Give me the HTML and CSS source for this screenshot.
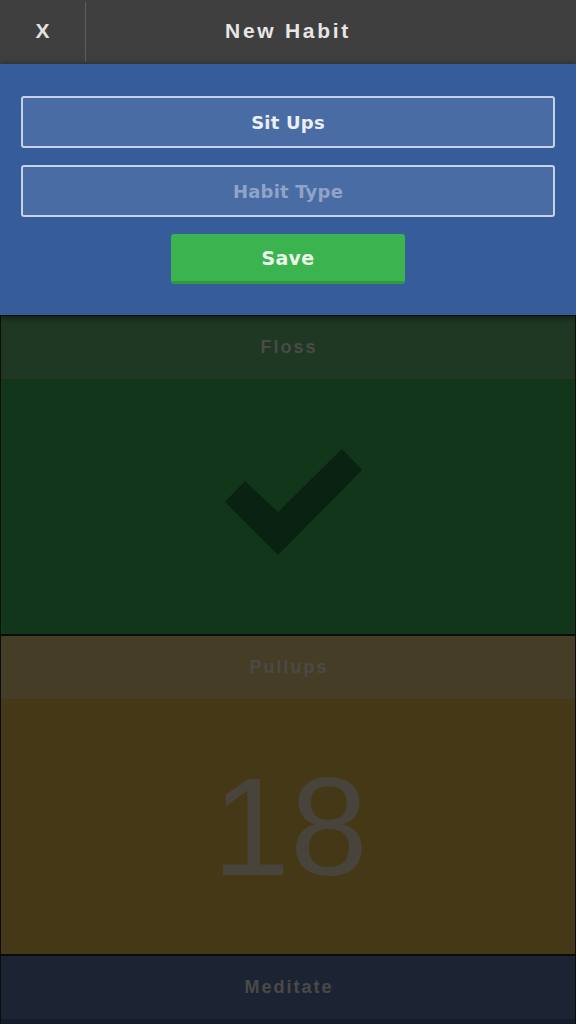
FILE: index.html
```html
<!DOCTYPE html>
<html lang="en">
<head>
<meta charset="utf-8">
<title>New Habit</title>
<link rel="stylesheet" href="styles.css">
</head>
<body>
<div class="app">
  <header class="topbar">
    <div class="close">X</div>
    <div class="divider"></div>
    <div class="title">New Habit</div>
  </header>

  <section class="form-panel">
    <div class="field"><span class="field-value">Sit Ups</span></div>
    <div class="field"><span class="field-placeholder">Habit Type</span></div>
    <div class="save-row"><div class="save-btn">Save</div></div>
  </section>

  <div class="cards">
    <div class="card card-green">
      <div class="card-head">Floss</div>
      <div class="card-body">
        <svg class="check" width="137" height="106" viewBox="0 0 137 106">
          <polygon points="0,53 20,32 53,63 117,0 137,21 53,106" fill="#0a2211"/>
        </svg>
      </div>
    </div>
    <div class="card card-yellow">
      <div class="card-head">Pullups</div>
      <div class="card-body"><span class="count">18</span></div>
    </div>
    <div class="card card-blue">
      <div class="card-head">Meditate</div>
      <div class="card-body"></div>
    </div>
  </div>
</div>
</body>
</html>
```

FILE: styles.css
```css
* { box-sizing: border-box; }

html, body {
  margin: 0;
  padding: 0;
  background: #141b2a;
  overflow: hidden;
}

.app {
  width: 576px;
  font-family: "Liberation Sans", Arial, sans-serif;
}

/* Top bar */
.topbar {
  height: 64px;
  background: #3f3f3f;
  display: flex;
  align-items: stretch;
}

.close {
  width: 85px;
  display: flex;
  align-items: center;
  justify-content: center;
  color: #e2e2e2;
  font-weight: bold;
  font-size: 21px;
  padding-bottom: 2px;
}

.divider {
  width: 1px;
  margin: 2px 0;
  background: #5e5e5e;
}

.title {
  flex: 1;
  display: flex;
  align-items: center;
  justify-content: center;
  padding-right: 86px;
  padding-bottom: 2px;
  color: #e6e6e6;
  font-weight: bold;
  font-size: 21px;
  letter-spacing: 2.7px;
}

/* Form panel */
.form-panel {
  position: relative;
  z-index: 1;
  background: #365c9a;
  padding: 32px 21px 31px;
  display: flex;
  flex-direction: column;
  gap: 17px;
  box-shadow: 0 2px 8px rgba(0, 0, 0, 0.55);
}

.field {
  height: 52px;
  border: 2px solid #c6d2e6;
  border-radius: 3px;
  background: #4a6ca4;
  display: flex;
  align-items: center;
  justify-content: center;
  font-family: "DejaVu Sans", Verdana, sans-serif;
  font-weight: bold;
  font-size: 18px;
}

.field-value { color: #eaeef5; letter-spacing: 0.2px; }
.field-placeholder { color: #8fa4c7; letter-spacing: 0.2px; }

.save-row {
  display: flex;
  justify-content: center;
}

.save-btn {
  width: 234px;
  height: 50px;
  background: #3bb34f;
  border-bottom: 3px solid #2d9a3f;
  border-radius: 3px;
  display: flex;
  align-items: center;
  justify-content: center;
  color: #eaf6ea;
  font-family: "DejaVu Sans", Verdana, sans-serif;
  font-weight: bold;
  font-size: 19px;
  letter-spacing: 0.3px;
}

/* Cards */
.cards {
  display: flex;
  flex-direction: column;
}

.card {
  height: 320px;
  border: 1px solid #0b0d0b;
  display: flex;
  flex-direction: column;
}

.card-head {
  height: 63px;
  flex: none;
  display: flex;
  align-items: center;
  justify-content: center;
  font-weight: bold;
  font-size: 18px;
  letter-spacing: 2px;
  color: #4a4a47;
  padding-left: 2px;
}

.card-body {
  flex: 1;
  display: flex;
  align-items: center;
  justify-content: center;
}

.card-green .card-head { background: #1f3823; }
.card-green .card-body { background: #11361a; }

.card-yellow .card-head { background: #463d26; }
.card-yellow .card-body { background: #453817; }

.card-blue .card-head { background: #1c2434; }
.card-blue .card-body { background: #141b2a; }

.check {
  margin-left: 11px;
  margin-bottom: 10px;
}

.count {
  font-size: 140px;
  color: #48443b;
  line-height: 1;
  margin-left: 4px;
}
```
